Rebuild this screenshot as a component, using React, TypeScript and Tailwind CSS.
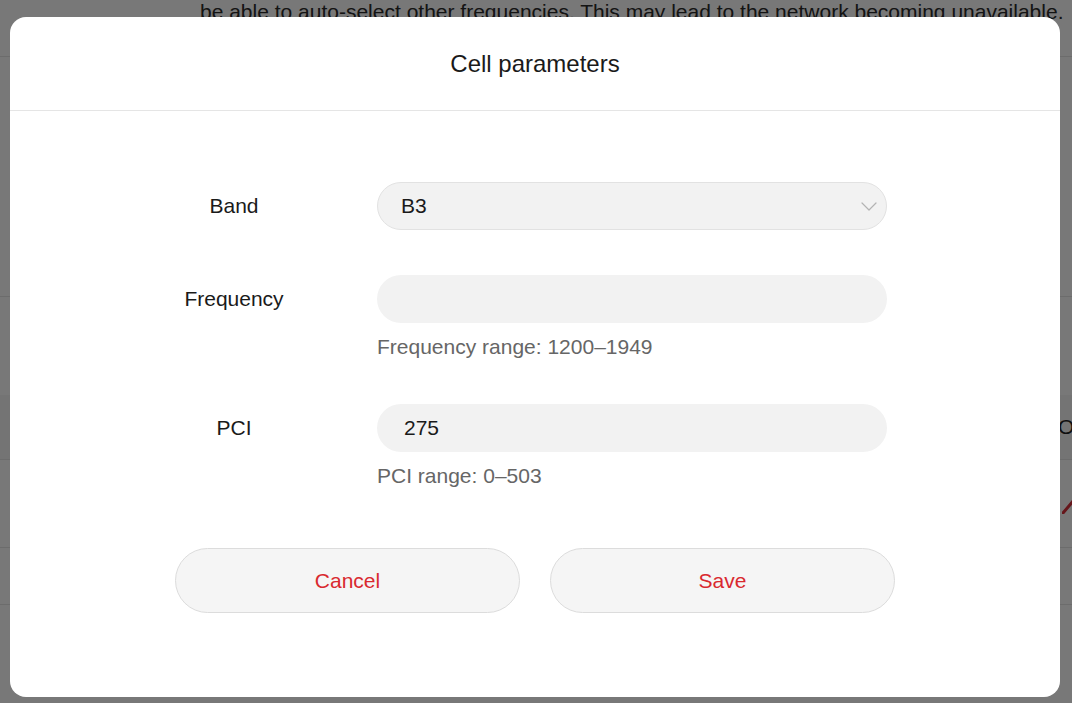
import React from 'react';

const ChevronDown = () => (
  <svg width="16" height="9" viewBox="0 0 16 9" fill="none" className="shrink-0">
    <path d="M1 1l7 7 7-7" stroke="#b3b3b3" strokeWidth="1.2" strokeLinecap="round" strokeLinejoin="round" />
  </svg>
);

interface FieldRowProps {
  label: string;
  hint?: string;
  children: React.ReactNode;
}

const FieldRow: React.FC<FieldRowProps> = ({ label, hint, children }) => (
  <div className="flex">
    <div className="w-[224px] h-[48px] flex items-center justify-center text-[21px] text-[#1a1a1a]">{label}</div>
    <div className="ml-[31px] w-[510px]">
      {children}
      {hint && <p className="mt-[12px] text-[21px] leading-[24px] text-[#666666]">{hint}</p>}
    </div>
  </div>
);

const App: React.FC = () => {
  return (
    <div className="relative h-[703px] w-[1072px] overflow-hidden bg-white font-['Liberation_Sans',Arial,sans-serif]">
      {/* page behind the dialog */}
      <div className="h-[57px] border-b border-[#e6e6e6] pl-[200px] text-[21px] leading-[24px] text-[#2b2b2b] whitespace-nowrap">
        be able to auto-select other frequencies. This may lead to the network becoming unavailable.
      </div>
      <div className="h-[240px] border-b border-[#e6e6e6]" />
      <div className="h-[98px]" />
      <div className="h-[65px] border-b border-[#e6e6e6] bg-[#f7f7f7] pl-[1058px] flex items-center text-[21px] text-[#222] whitespace-nowrap">
        On
      </div>
      <div className="h-[88px] border-b border-[#e6e6e6] pl-[1062px] pt-[36px]">
        <svg width="12" height="18" viewBox="0 0 12 18">
          <path d="M1 17L12 4" stroke="#d8303a" strokeWidth="3" strokeLinecap="round" />
        </svg>
      </div>
      <div className="h-[57px] border-b border-[#e6e6e6]" />

      {/* overlay + dialog */}
      <div className="absolute inset-0 bg-black/[0.53] flex pl-[10px] pt-[17px]">
        <div className="w-[1050px] h-[680px] rounded-[16px] bg-white flex flex-col">
          <div className="h-[94px] shrink-0 border-b border-[#e5e5e5] flex items-center justify-center text-[24px] text-[#1a1a1a]">
            Cell parameters
          </div>

          <div className="pt-[71px] pl-[112px] flex flex-col gap-[45px]">
            <FieldRow label="Band">
              <div className="h-[48px] rounded-full border border-[#e2e2e2] bg-[#f2f2f2] pl-[23px] pr-[9px] flex items-center justify-between text-[21px] text-[#1a1a1a]">
                <span>B3</span>
                <ChevronDown />
              </div>
            </FieldRow>

            <FieldRow label="Frequency" hint="Frequency range: 1200–1949">
              <input
                className="h-[48px] w-full rounded-full bg-[#f2f2f2] pl-[27px] text-[21px] text-[#1a1a1a] outline-none"
                defaultValue=""
              />
            </FieldRow>

            <FieldRow label="PCI" hint="PCI range: 0–503">
              <input
                className="h-[48px] w-full rounded-full bg-[#f2f2f2] pl-[27px] text-[21px] text-[#1a1a1a] outline-none"
                defaultValue="275"
              />
            </FieldRow>
          </div>

          <div className="mt-[60px] flex justify-center gap-[30px]">
            <button className="w-[345px] h-[65px] rounded-full border border-[#dcdcdc] bg-[#f5f5f5] text-[21px] text-[#d9292f]">
              Cancel
            </button>
            <button className="w-[345px] h-[65px] rounded-full border border-[#dcdcdc] bg-[#f5f5f5] text-[21px] text-[#d9292f]">
              Save
            </button>
          </div>
        </div>
      </div>
    </div>
  );
};

export default App;
